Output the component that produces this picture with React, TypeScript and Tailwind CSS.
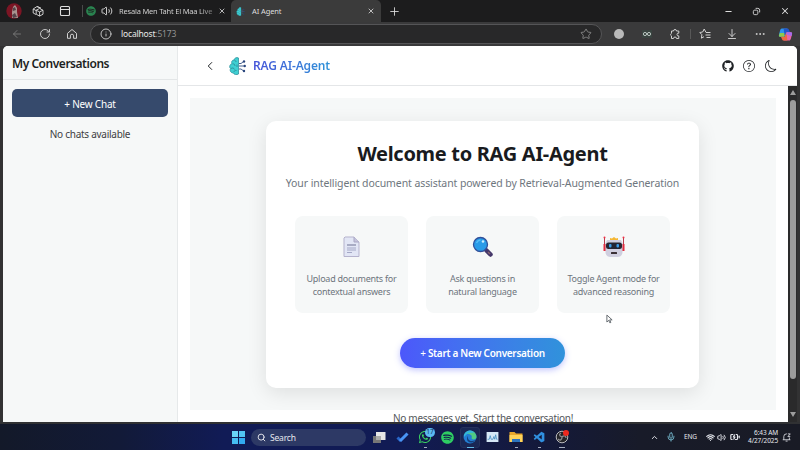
import React from "react";
import {
  ArrowLeft, RotateCw, Info, Star, ArrowDownToLine, Ellipsis, Plus, X, Minus,
  Volume2, Search, ChevronLeft, ChevronUp, Wifi, Mic, BatteryCharging, PanelTop,
} from "lucide-react";
import { FaGithub, FaSpotify, FaWhatsapp } from "react-icons/fa";
import { BsMoon, BsQuestionCircle } from "react-icons/bs";
import { VscVscode } from "react-icons/vsc";

function BrainLogo({ className }: { className: string }) {
  return (
    <svg viewBox="0 0 34 36" className={className} fill="none">
      <path d="M19 2c-4-2-8 0-9 4-4 0-6 4-4 7-5 2-6 8-3 10-2 5 1 9 6 9 1 4 7 4 10 2z" fill="#3fcfd2" stroke="#2b8f9b" strokeWidth="1.5" />
      <path d="M11 7c2 0 3 1 3 3M7 14c3-1 5 1 5 4M4 23c3-2 6-1 7 2M16 15v5M10 30c0-2 2-4 5-3" stroke="#2a8290" strokeWidth="1.5" />
      <path d="M20 18h10M20 13h4l4-3M20 24h4l4 3" stroke="#466291" strokeWidth="2" />
      <circle cx="30" cy="9" r="2.4" fill="#29457c" />
      <circle cx="31.5" cy="18" r="2.4" fill="#29457c" />
      <circle cx="30" cy="28" r="2.4" fill="#29457c" />
    </svg>
  );
}

function TabStrip() {
  return (
    <div className="flex h-[22px] shrink-0 items-center bg-[#1c1c1d] pr-[10px] pl-[6px] text-[#dedede]">
      <svg viewBox="0 0 16 16" className="size-4 shrink-0">
        <circle cx="8" cy="8" r="7.7" fill="#7c1524" />
        <path d="M6 15V9l1-5 2-2 2 3v4l1 6z" fill="#a8938f" />
        <path d="M7 5l2-1 1 3-3 1zM6 12l3-2 2 4-4 1z" fill="#55444a" />
      </svg>
      <svg viewBox="0 0 12 12" className="ml-[10px] size-3 shrink-0" fill="none" stroke="currentColor" strokeWidth=".9" strokeLinejoin="round">
        <path d="M4 9.500 1.200 8V4L5 1.500l3.500 1.500" />
        <path d="M1.200 4 4 5.500M5 1.500 9 3.200" />
        <path d="m4.200 5.200 3.400-1.700 3.400 1.700v4l-3.400 1.900-3.400-1.900zM4.200 5.200l3.400 1.700L11 5.200M7.600 6.900v4.200" />
      </svg>
      <PanelTop className="ml-[15px] size-3 shrink-0" strokeWidth={2.2} />
      <div className="ml-[11px] h-3 w-px shrink-0 bg-[#4a4a4a]" />
      <FaSpotify className="ml-[3px] size-[10px] shrink-0 text-[#2a8450]" />
      <Volume2 className="ml-[5px] size-3 shrink-0" strokeWidth={1.8} />
      <div className="ml-[6px] w-[95px] shrink-0 bg-gradient-to-r from-[#dedede] from-85% to-[#666] to-100% bg-clip-text text-[7.5px] leading-3 tracking-[-0.2px] whitespace-nowrap text-transparent">
        Resala Men Taht El Maa Live
      </div>
      <X className="ml-[4px] size-2 shrink-0" strokeWidth={2.4} />
      <div className="ml-[5px] flex h-[22px] w-[150px] shrink-0 items-center rounded-t-[5px] bg-[#3b3b3b] pr-[6px] pl-[5px]">
        <BrainLogo className="size-[9px] shrink-0" />
        <span className="ml-[7px] text-[7.5px] leading-3 tracking-[-0.1px]">AI Agent</span>
        <X className="ml-auto size-2" strokeWidth={2.4} />
      </div>
      <Plus className="ml-[7px] size-[13px] shrink-0" strokeWidth={1.6} />
      <Minus className="ml-auto size-[9px] shrink-0" strokeWidth={3} />
      <svg viewBox="0 0 10 10" className="ml-[19px] size-[9px] shrink-0" fill="none" stroke="currentColor">
        <rect x="1.5" y="3.5" width="5" height="5" rx="1.5" />
        <path d="M4 1.5h2.5a2 2 0 0 1 2 2V6" />
      </svg>
      <X className="ml-[19px] size-[10px] shrink-0" strokeWidth={2.5} />
    </div>
  );
}

function AddressRow() {
  return (
    <div className="flex h-[24px] shrink-0 items-center bg-[#3a3a3b] pl-[11px] text-[#d0d0d0]">
      <ArrowLeft className="size-3 shrink-0 text-[#7b7b7b]" strokeWidth={1.8} />
      <RotateCw className="ml-[16px] size-3 shrink-0" strokeWidth={1.9} />
      <svg viewBox="0 0 12 12" className="ml-[15px] size-3 shrink-0" fill="none" stroke="currentColor" strokeLinejoin="round">
        <path d="M1.500 5.300 6 1.500l4.500 3.800v5H7.600V7.800a1.600 1.600 0 0 0-3.200 0v2.500H1.500z" />
      </svg>
      <div className="ml-[12px] flex h-[20px] w-[512px] shrink-0 items-center rounded-full border border-[#555557] bg-[#282829] pr-[9px] pl-[9px]">
        <Info className="size-3" strokeWidth={1.8} />
        <span className="ml-[9px] text-[8.5px] leading-3 tracking-[-0.18px] text-[#e8e8e8]">
          localhost<span className="text-[#929292]">:5173</span>
        </span>
        <Star className="ml-auto size-[12px] text-[#8b8b8b]" strokeWidth={1.8} />
      </div>
      <div className="ml-[12px] size-[10px] shrink-0 rounded-full bg-[#b9b9b9]" />
      <div className="ml-[18px] flex h-[8px] w-[10px] shrink-0 items-center justify-center bg-[#38433f]">
        <svg viewBox="0 0 10 10" className="size-[10px]" fill="none" stroke="#b8c4bf">
          <circle cx="3" cy="5" r="1.6" />
          <circle cx="7" cy="5" r="1.6" />
        </svg>
      </div>
      <svg viewBox="0 0 12 12" className="ml-[17px] size-3 shrink-0" fill="none" stroke="currentColor" strokeLinejoin="round">
        <path d="M2.500 3h2a1.500 1.500 0 0 1 3 0h2.300v2.200a1.400 1.400 0 1 0 0 2.700v2.600H7.500a1.500 1.500 0 0 0-3 0h-2V8a1.500 1.500 0 0 1 0-2.700z" />
      </svg>
      <div className="ml-[9px] h-[10px] w-px shrink-0 bg-[#585858]" />
      <svg viewBox="0 0 12 12" className="ml-[8px] size-3 shrink-0" fill="none" stroke="currentColor" strokeLinejoin="round">
        <path d="M6.800 4 5.200 1 3.700 4 .8 4.500l2.100 2.200-.5 3.500L5 8.700M6.800 4.500H11.500M6.500 7H11.500M7.500 9.500h4" />
      </svg>
      <ArrowDownToLine className="ml-[15px] size-3 shrink-0" strokeWidth={1.9} />
      <Ellipsis className="ml-[16px] size-3 shrink-0" strokeWidth={2} />
      <svg viewBox="0 0 16 16" className="ml-[12px] size-[15px] shrink-0">
        <path d="M4 1.500h6l-3 9H3C0 10.500 1 8.500 2 4.500c.5-2 1-3 2-3z" fill="#2f95ee" />
        <path d="M2 6.500h6l-1.500 4H3C0 10.500 1 9.500 2 6.500z" fill="#8ccb4f" />
        <path d="M6 1.500h4c2 0 2 3 3 4H9L7 9z" fill="#2456c9" />
        <path d="M12 14.500H6l3-9h4c3 0 2 2 1 6-.5 2-1 3-2 3z" fill="#e765a6" />
        <path d="M10 14.500H6c-2 0-2-3-3-4h4l2-4z" fill="#ee6a3e" />
        <path d="M9 5.500h4c3 0 2 2 1.500 4L9 8z" fill="#a66bec" />
      </svg>
    </div>
  );
}

function Sidebar() {
  return (
    <aside className="flex w-[175px] shrink-0 flex-col border-r border-[#e6e9ea] bg-[#f6f8f8]">
      <div className="flex h-[34px] items-center border-b border-[#e3e6e7] pt-[2px] pl-[9px] text-[12px] font-semibold tracking-[-0.47px] text-[#1d1f22]">
        My Conversations
      </div>
      <button className="mx-[9px] mt-[9px] h-[28px] rounded-[5px] bg-[#364a6c] pt-[2px] text-[10px] tracking-[-0.22px] text-white">
        + New Chat
      </button>
      <div className="mt-[9px] text-center text-[10px] leading-4 tracking-[-0.27px] text-[#3d4043]">No chats available</div>
    </aside>
  );
}

function PageHeader() {
  return (
    <header className="flex h-[40px] shrink-0 items-center border-b border-[#e4e6e8] bg-white pr-[20px] pl-[25px] text-[#202326]">
      <ChevronLeft className="size-[14px]" strokeWidth={1.7} />
      <BrainLogo className="ml-[12px] h-[18px] w-[17px]" />
      <span className="ml-[7px] bg-gradient-to-r from-[#4653d8] to-[#2e92d8] bg-clip-text pt-px text-[12px] font-semibold tracking-[-0.15px] text-transparent">
        RAG AI-Agent
      </span>
      <FaGithub className="ml-auto size-[12px]" />
      <BsQuestionCircle className="ml-[9px] size-[12px]" />
      <BsMoon className="ml-[10px] size-[12px]" />
    </header>
  );
}

function DocumentIcon() {
  return (
    <svg viewBox="0 0 20 22" className="h-[22px] w-5" fill="none">
      <path d="M3 1h9l5 5v14.500H2V2z" fill="#e2e6f5" stroke="#b5b3cd" />
      <path d="M12 1v5h5" fill="#c5c4dc" stroke="#aaa8c5" />
      <path d="M5 9h9" stroke="#6f7393" strokeWidth="1.200" />
      <path d="M5 12h9M5 14h9M5 16.500h5" stroke="#a4a8c6" />
    </svg>
  );
}

function MagnifierIcon() {
  return (
    <svg viewBox="0 0 22 22" className="size-[22px]">
      <path d="m14.500 14.500 4 4" stroke="#44376a" strokeWidth="4.500" strokeLinecap="round" />
      <path d="m16 16 2 2" stroke="#8a6670" strokeWidth="1.500" />
      <circle cx="8.500" cy="8.500" r="7" fill="#299be8" stroke="#31509a" strokeWidth="1.300" />
      <path d="M4.500 7a5 5 0 0 1 4-3" stroke="#55bcf5" strokeWidth="1.500" fill="none" />
      <circle cx="11" cy="5.500" r="1.300" fill="#c8eeff" />
    </svg>
  );
}

function RobotIcon() {
  return (
    <svg viewBox="0 0 22 22" className="size-[22px]">
      <path d="M1.500 1v8M20.500 1v8" stroke="#b83c4d" />
      <path d="M.5 8h3v7H.5zM18.500 8h3v7h-3z" fill="#e22d3f" />
      <circle cx="1.500" cy="1.500" r="1" fill="#ed3347" />
      <circle cx="20.500" cy="1.500" r="1" fill="#ed3347" />
      <path d="M7 4.500V2l2 .500L11 1l2 1.500 2-.5v2.500z" fill="#f5b733" />
      <path d="M4 4h14l1.500 3v9c0 3-2 5-5 5h-7c-3 0-5-2-5-5V7z" fill="#d0cfdf" />
      <rect x="3" y="6.500" width="16" height="6.500" rx="2.500" fill="#252631" />
      <rect x="6" y="8" width="2.500" height="3.500" rx="1" fill="#3d9ee9" />
      <rect x="13.500" y="8" width="2.500" height="3.500" rx="1" fill="#3d9ee9" />
      <rect x="8" y="16" width="6" height="2" rx=".5" fill="#3a3035" />
    </svg>
  );
}

function Feature({ icon, lines }: { icon: React.ReactNode; lines: string[] }) {
  return (
    <div className="flex h-[97px] w-[113px] flex-col items-center rounded-[8px] bg-[#f6f8f8] pt-[20px]">
      {icon}
      <div className="mt-[13.5px] text-center text-[9px] leading-[13px] tracking-[-0.24px] whitespace-nowrap text-[#6d757d]">
        {lines.map((line) => (
          <div key={line}>{line}</div>
        ))}
      </div>
    </div>
  );
}

function Welcome() {
  return (
    <div className="min-w-0 flex-1 overflow-hidden bg-white pt-[12px] pl-[12px]">
      <div className="flex h-[312px] w-[586px] justify-center bg-[#f6f8f8] pt-[23px] pr-[1px]">
        <section className="flex h-[267px] w-[433px] flex-col items-center rounded-[10px] bg-white pt-[19px] shadow-[0_5px_20px_rgba(0,0,0,0.1)]">
          <h1 className="text-[20px] leading-[28px] font-bold tracking-[-0.3px] whitespace-nowrap text-[#191b1e]">Welcome to RAG AI-Agent</h1>
          <p className="mt-[7px] text-[10.5px] leading-4 tracking-[-0.085px] whitespace-nowrap text-[#6e767e]">
            Your intelligent document assistant powered by Retrieval-Augmented Generation
          </p>
          <div className="mt-[25px] flex gap-[18px]">
            <Feature icon={<DocumentIcon />} lines={["Upload documents for", "contextual answers"]} />
            <Feature icon={<MagnifierIcon />} lines={["Ask questions in", "natural language"]} />
            <Feature icon={<RobotIcon />} lines={["Toggle Agent mode for", "advanced reasoning"]} />
          </div>
          <button className="mt-[25px] h-[30px] w-[165px] rounded-full bg-gradient-to-r from-[#4c57fb] to-[#3092db] pt-px text-[10px] font-semibold tracking-[-0.3px] whitespace-nowrap text-white shadow-[0_2px_6px_rgba(76,87,251,0.35)]">
            <span className="font-normal">+</span> Start a New Conversation
          </button>
        </section>
      </div>
      <div className="w-[586px] text-center text-[10px] leading-4 tracking-[-0.29px] text-[#54585c]">No messages yet. Start the conversation!</div>
    </div>
  );
}

function Scrollbar() {
  return (
    <div className="flex w-[9px] shrink-0 flex-col items-center bg-[#2a2a2b] pt-[4px] pb-[5px]">
      <div className="h-0 w-0 border-x-[3px] border-b-[5px] border-x-transparent border-b-[#9d9d9d]" />
      <div className="mt-[5px] h-[279px] w-[6px] rounded-full bg-[#9c9c9c]" />
      <div className="mt-auto h-0 w-0 border-x-[3px] border-t-[5px] border-x-transparent border-t-[#9d9d9d]" />
    </div>
  );
}

function Taskbar() {
  return (
    <div className="flex h-[26px] shrink-0 items-center bg-[linear-gradient(90deg,#131929_0%,#121a38_15%,#111b56_28%,#111b54_50%,#14193a_68%,#181b29_80%,#191b25_100%)] pr-[9px] pl-[232px] text-[#e6e8ee]">
      <div className="grid size-[13px] shrink-0 grid-cols-2 gap-px">
        <i className="bg-[#69d4f7]" />
        <i className="bg-[#51c4f4]" />
        <i className="bg-[#46bdf2]" />
        <i className="bg-[#32aaf0]" />
      </div>
      <div className="ml-[6px] flex h-[17px] w-[115px] shrink-0 items-center rounded-full bg-[#2d3965] pl-[6px]">
        <Search className="size-[9px]" strokeWidth={2.5} />
        <span className="ml-[4px] pt-px text-[8.5px] leading-3 tracking-[-0.2px]">Search</span>
      </div>
      <svg viewBox="0 0 13 13" className="ml-[7px] size-[13px] shrink-0">
        <rect x="0" y="5" width="8" height="7" fill="#777" />
        <rect x="3" y="1" width="9.500" height="8" fill="#e6e6e6" />
        <path d="M3 5h5v4H3z" fill="#aaa" />
      </svg>
      <svg viewBox="0 0 13 13" className="ml-[10px] size-[13px] shrink-0" fill="none">
        <path d="m1.500 6.500 3.500 3.500" stroke="#2866c9" strokeWidth="3" />
        <path d="m4 10 7.500-7.500" stroke="#4995f5" strokeWidth="3" />
      </svg>
      <div className="relative ml-[9px] flex h-[26px] w-[14px] shrink-0 items-center justify-center">
        <FaWhatsapp className="size-[14px] text-[#39d163]" />
        <span className="absolute top-[4px] left-[7px] flex h-[9px] w-[10px] items-center justify-center rounded-full bg-[#5bbaf3] text-[6.5px] leading-none text-[#12315a]">17</span>
        <i className="absolute bottom-[2px] left-[6px] h-px w-[3px] bg-[#a5adbf]" />
      </div>
      <FaSpotify className="ml-[9px] size-[13px] shrink-0 text-[#2ecc63]" />
      <div className="relative ml-[6px] flex h-[21px] w-[20px] shrink-0 items-center justify-center rounded-[3px] border border-[#26315b] bg-[#1a2754]">
        <svg viewBox="0 0 14 14" className="size-[14px] shrink-0">
          <circle cx="7" cy="7" r="6.500" fill="#237ed2" />
          <path d="M1 5C3-1 13-1 13.500 7c0 3-5 3-5 1 2-3-4-6-7.500-3z" fill="#50cb83" />
          <path d="M1 5C3 0 9-1 11 3 7 2 4 3 1 7z" fill="#32b5dc" />
          <path d="M5 6c-1 5 4 6 7 4-2 4-8 3-8-1 0-1 0-2 1-3z" fill="#153e7b" />
        </svg>
        <i className="absolute bottom-[-1px] left-[6px] h-px w-[7px] bg-[#63bce8]" />
      </div>
      <svg viewBox="0 0 13 11" className="ml-[6px] h-[10px] w-[13px] shrink-0" fill="none">
        <path d="M0 0h13v11H0z" fill="#d5e8f7" />
        <path d="M1 8h2l1-4 1 4h2l1-3 1 3 1-5 1 5h1" stroke="#3b87bd" strokeWidth=".8" />
      </svg>
      <div className="relative ml-[10px] flex h-[26px] w-[14px] shrink-0 items-center justify-center">
        <svg viewBox="0 0 14 12" className="h-[12px] w-[14px]">
          <path d="M.5 1h5l1.500 1.500h6.500V11H.5z" fill="#e9a82b" />
          <path d="M.5 4h13v7H.5z" fill="#ffd45a" />
          <path d="M3 8h8v3H3z" fill="#2d75bf" />
        </svg>
        <i className="absolute bottom-[2px] left-[6px] h-px w-[3px] bg-[#a5adbf]" />
      </div>
      <div className="relative ml-[10px] flex h-[26px] w-[13px] shrink-0 items-center justify-center">
        <VscVscode className="size-[13px] text-[#3090df]" />
        <i className="absolute bottom-[2px] left-[5px] h-px w-[3px] bg-[#a5adbf]" />
      </div>
      <div className="relative ml-[9px] flex h-[26px] w-[14px] shrink-0 items-center justify-center">
        <svg viewBox="0 0 14 14" className="size-[14px]" fill="none">
          <circle cx="7" cy="7" r="5.800" fill="#242428" stroke="#b9b9bc" />
          <path d="M7 7c-3-1-3-3-1-4M7 7c2-2 4-1 4 1M7 7c0 3-2 4-4 2" stroke="#8d8d92" strokeWidth="1.300" />
        </svg>
        <i className="absolute top-[6px] left-[8px] size-[6px] rounded-full bg-[#ed291f]" />
        <i className="absolute bottom-[2px] left-[4px] h-px w-[6px] bg-[#a5adbf]" />
      </div>
      <ChevronUp className="ml-auto size-[9px] shrink-0" strokeWidth={2.5} />
      <Mic className="ml-[7px] size-[10px] shrink-0 text-[#7bc3d8]" />
      <span className="ml-[8px] w-[15px] shrink-0 text-[6.5px] tracking-[-0.1px]">ENG</span>
      <Wifi className="ml-[7px] size-[9px] shrink-0" strokeWidth={3} />
      <Volume2 className="ml-[2px] size-[9px] shrink-0" strokeWidth={2.4} />
      <BatteryCharging className="ml-[4px] size-[10px] shrink-0" strokeWidth={2.8} />
      <div className="ml-[3px] w-[35px] shrink-0 text-right text-[6.5px] leading-[8px] tracking-[-0.1px] whitespace-nowrap">
        <div>6:43 AM</div>
        <div>4/27/2025</div>
      </div>
      <svg viewBox="0 0 10 10" className="ml-[4px] size-[9px] shrink-0" fill="none" stroke="currentColor" strokeWidth=".9">
        <path d="M2 7.500V4a3 3 0 0 1 3-3h.5M8.200 5v2.500M.8 7.500h8.500M4 9h2.200M6.500 1h2.700L6.500 4h2.700" />
      </svg>
    </div>
  );
}

export default function App() {
  return (
    <div className="relative flex h-[450px] w-[800px] flex-col overflow-hidden bg-[#323233] font-['Noto_Sans',sans-serif]">
      <TabStrip />
      <AddressRow />
      <div className="mr-[3px] ml-[3px] flex h-[376px] shrink-0 overflow-hidden rounded-t-[5px] bg-white">
        <Sidebar />
        <main className="flex min-w-0 flex-1 flex-col">
          <PageHeader />
          <div className="flex min-h-0 flex-1">
            <Welcome />
            <Scrollbar />
          </div>
        </main>
      </div>
      <div className="h-[2px] shrink-0 bg-[#303133]" />
      <Taskbar />
      <svg viewBox="0 0 8 11" className="absolute top-[314px] left-[606px] h-[10px] w-[7px]" fill="white" stroke="#555b61">
        <path d="M1 1v8l2-2 1.500 3 1-.6L4.200 6.500H7z" />
      </svg>
    </div>
  );
}
